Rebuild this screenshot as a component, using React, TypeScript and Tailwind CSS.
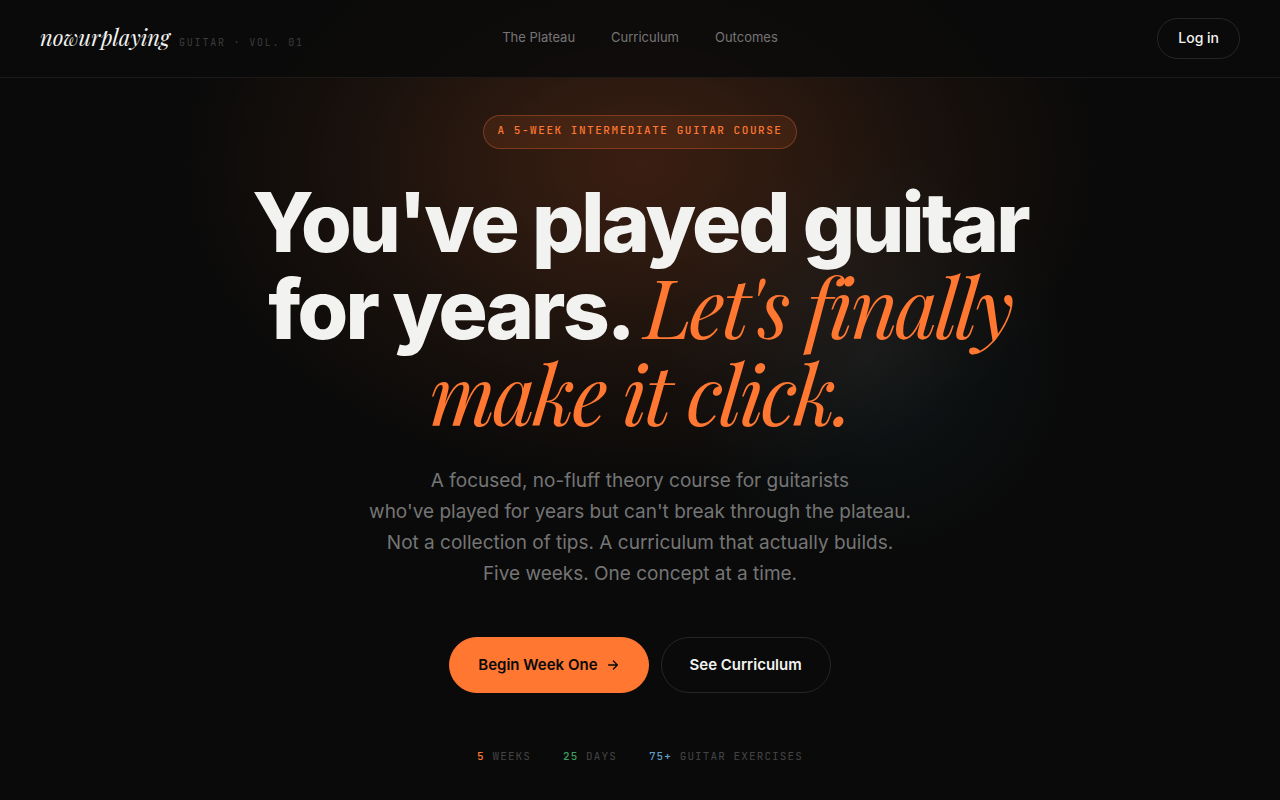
const links = [
  { label: "The Plateau", href: "#plateau" },
  { label: "Curriculum", href: "#curriculum" },
  { label: "Outcomes", href: "#outcomes" },
];

const stats = [
  { value: "5", label: "Weeks", color: "text-[#ff7730]" },
  { value: "25", label: "Days", color: "text-[#3f9a5c]" },
  { value: "75+", label: "Guitar Exercises", color: "text-[#5b9fc4]" },
];

function ArrowIcon() {
  return (
    <svg
      viewBox="0 0 16 16"
      className="size-3.5"
      fill="none"
      stroke="currentColor"
      strokeWidth="1.5"
      strokeLinecap="round"
      strokeLinejoin="round"
      aria-hidden="true"
    >
      <path d="M3 8h10M8.5 3.5 13 8l-4.5 4.5" />
    </svg>
  );
}

function Header() {
  return (
    <header className="grid grid-cols-[1fr_auto_1fr] items-center border-b border-[#1c1b1a] bg-[#0a0a0a]/85 px-10 py-[18px]">
      <a href="/" className="flex items-baseline gap-[9px] pb-1">
        <span className="font-['Playfair_Display','Liberation_Serif',serif] text-[22px] leading-8 text-[#f2f2f0] italic">
          nowurplaying
        </span>
        <span className="font-['JetBrains_Mono','Liberation_Mono',monospace] text-[10px] tracking-[0.18em] text-[#3c3c3c] uppercase">
          Guitar · Vol. 01
        </span>
      </a>

      <nav className="flex gap-9 pb-1 text-[13px] leading-5 text-[#757575]">
        {links.map((link) => (
          <a key={link.href} href={link.href}>
            {link.label}
          </a>
        ))}
      </nav>

      <button
        type="button"
        className="justify-self-end rounded-full border border-[#262626] px-5 pt-2 pb-2.5 text-sm leading-[21px] font-medium text-[#f2f2f0]"
      >
        Log in
      </button>
    </header>
  );
}

export default function App() {
  return (
    <div className="min-h-screen bg-[#0a0a0a] bg-[radial-gradient(ellipse_470px_325px_at_50%_165px,rgba(255,105,50,0.2),rgba(255,120,50,0.15)_25%,rgba(255,120,50,0.05)_68%,transparent),radial-gradient(circle_205px_at_calc(50%+230px)_355px,rgba(70,120,140,0.12),rgba(50,110,130,0.06)_50%,transparent)] bg-no-repeat font-['Inter',sans-serif] text-[#f2f2f0]">
      <Header />

      <main className="flex flex-col items-center px-10 pt-[37px] pb-9 text-center">
        <p className="rounded-full border border-[#ff7730]/30 bg-[#ff7730]/10 px-3.5 pt-[5px] pb-[9px] font-['JetBrains_Mono','Liberation_Mono',monospace] text-[11px] leading-[18px] font-medium tracking-[0.14em] text-[#ff7730] uppercase">
          A 5-week intermediate guitar course
        </p>

        <h1 className="mt-8 text-[82px] leading-[83px] font-extrabold tracking-[-0.035em]">
          You've played guitar
          <br />
          for years.{" "}
          <em className="font-['Playfair_Display','Liberation_Serif',serif] font-normal text-[#ff7730]">
            Let's finally
            <br />
            make it click.
          </em>
        </h1>

        <p className="mt-[27px] text-[19px] leading-[31px] text-[#757575]">
          A focused, no-fluff theory course for guitarists
          <br />
          who've played for years but can't break through the plateau.
          <br />
          Not a collection of tips. A curriculum that actually builds.
          <br />
          Five weeks. One concept at a time.
        </p>

        <div className="mt-12 flex gap-3 text-[15px] leading-6 font-semibold">
          <button
            type="button"
            className="flex items-center gap-2 rounded-full border border-[#ff7730] bg-[#ff7730] px-7 py-[15px] text-[#0a0a0a]"
          >
            Begin Week One
            <ArrowIcon />
          </button>
          <button
            type="button"
            className="rounded-full border border-[#262626] px-7 py-[15px]"
          >
            See Curriculum
          </button>
        </div>

        <ul className="mt-[55px] flex gap-8 font-['JetBrains_Mono','Liberation_Mono',monospace] text-[11px] leading-4 tracking-[0.1em] text-[#444] uppercase">
          {stats.map((stat) => (
            <li key={stat.label}>
              <span className={`font-medium ${stat.color}`}>{stat.value}</span>{" "}
              {stat.label}
            </li>
          ))}
        </ul>
      </main>
    </div>
  );
}
